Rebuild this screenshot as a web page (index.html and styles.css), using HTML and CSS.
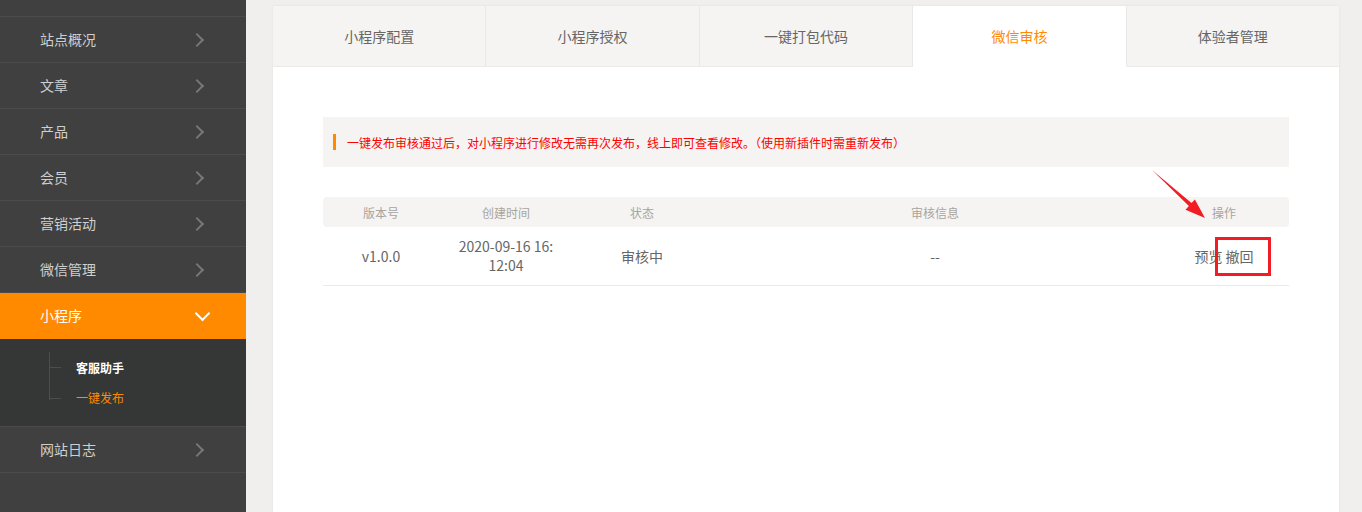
FILE: index.html
```html
<!DOCTYPE html>
<html lang="zh-CN">
<head>
    <meta charset="UTF-8">
    <title>一键发布</title>
    <link rel="stylesheet" href="styles.css">
</head>
<body>
<div class="layout">

    <!-- Sidebar -->
    <div class="sidebar">
        <div class="nav-item nav-cut"></div>
        <div class="nav-item"><span>站点概况</span><i class="chev"></i></div>
        <div class="nav-item"><span>文章</span><i class="chev"></i></div>
        <div class="nav-item"><span>产品</span><i class="chev"></i></div>
        <div class="nav-item"><span>会员</span><i class="chev"></i></div>
        <div class="nav-item"><span>营销活动</span><i class="chev"></i></div>
        <div class="nav-item"><span>微信管理</span><i class="chev"></i></div>
        <div class="nav-item active"><span>小程序</span><i class="chev down"></i></div>
        <div class="sub-menu">
            <div class="sub-tree">
                <div class="sub-item">客服助手</div>
                <div class="sub-item current">一键发布</div>
            </div>
        </div>
        <div class="nav-item"><span>网站日志</span><i class="chev"></i></div>
    </div>

    <!-- Main -->
    <div class="main">
        <div class="card">
            <div class="tabs">
                <div class="tab">小程序配置</div>
                <div class="tab">小程序授权</div>
                <div class="tab">一键打包代码</div>
                <div class="tab active">微信审核</div>
                <div class="tab">体验者管理</div>
            </div>

            <div class="card-body">
                <div class="notice">
                    <span class="notice-bar"></span>
                    一键发布审核通过后，对小程序进行修改无需再次发布，线上即可查看修改。（使用新插件时需重新发布）
                </div>

                <div class="table">
                    <div class="tr th">
                        <div class="c1">版本号</div>
                        <div class="c2">创建时间</div>
                        <div class="c3">状态</div>
                        <div class="c4">审核信息</div>
                        <div class="c5">操作</div>
                    </div>
                    <div class="tr td">
                        <div class="c1">v1.0.0</div>
                        <div class="c2"><div class="date">2020-09-16 16:12:04</div></div>
                        <div class="c3">审核中</div>
                        <div class="c4">--</div>
                        <div class="c5"><a>预览</a> <a>撤回</a></div>
                    </div>
                </div>
            </div>

            <!-- annotation -->
            <svg class="mark-arrow" width="65" height="60" viewBox="0 0 65 60">
                <polygon points="4,4 43.5,37.1 46.9,33.4 57,52 37.5,43.8 40.9,40.1" fill="#f21c24"/>
            </svg>
            <div class="mark-box"></div>
        </div>
    </div>

</div>
</body>
</html>
```

FILE: styles.css
```css
body {
    margin: 0;
    font-family: "Noto Sans CJK SC", "Liberation Sans", sans-serif;
    background-color: #f0efee;
    overflow: hidden;
}

.layout {
    display: flex;
    height: 512px;
}

/* Sidebar */
.sidebar {
    width: 246px;
    flex-shrink: 0;
    background-color: #404040;
}

.nav-item {
    height: 45px;
    box-sizing: content-box;
    border-bottom: 1px solid #4b4b4b;
    display: flex;
    align-items: center;
    justify-content: space-between;
    padding: 0 44px 0 40px;
    color: #cfcfcf;
    font-size: 14px;
}

.nav-item span {
    margin-top: -2px;
}

.nav-cut {
    height: 16px;
}

.nav-item.active {
    background-color: #ff8a00;
    color: #fff;
    border-bottom: none;
    height: 46px;
}

.chev {
    width: 8px;
    height: 8px;
    border-top: 2px solid #777;
    border-right: 2px solid #777;
    transform: rotate(45deg);
}

.chev.down {
    width: 9px;
    height: 9px;
    border-color: #fff;
    transform: rotate(135deg);
    margin-top: -5px;
    margin-right: -6px;
}

.sub-menu {
    background-color: #353636;
    height: 88px;
    border-bottom: 1px solid #4b4b4b;
    padding: 13px 0 0 49px;
    box-sizing: border-box;
}

.sub-tree {
    border-left: 1px solid #4d4d4d;
    height: 48px;
    padding-top: 8px;
    box-sizing: border-box;
}

.sub-item {
    position: relative;
    font-size: 12px;
    font-weight: bold;
    color: #fff;
    padding-left: 26px;
    height: 16px;
    line-height: 16px;
    margin-bottom: 14px;
}

.sub-item::before {
    content: "";
    position: absolute;
    left: 0;
    top: 7px;
    width: 11px;
    border-top: 1px solid #4d4d4d;
}

.sub-item.current {
    color: #ff8a00;
    font-weight: normal;
}

.sub-item.current::before {
    top: 8px;
}

/* Main */
.main {
    flex: 1;
    padding: 6px 23px 0 27px;
}

.card {
    position: relative;
    background-color: #fff;
    height: 520px;
    box-shadow: 0 0 3px rgba(0, 0, 0, 0.06);
}

.tabs {
    display: flex;
    height: 61px;
}

.tab {
    flex: 1;
    background-color: #f5f4f2;
    border-right: 1px solid #e9e8e6;
    border-bottom: 1px solid #ebeae8;
    display: flex;
    align-items: center;
    justify-content: center;
    font-size: 14px;
    color: #666;
}

.tab:last-child {
    border-right: none;
}

.tab.active {
    background-color: #fff;
    color: #ff8a00;
    border-bottom-color: #fff;
}

.card-body {
    padding: 50px 50px 0 50px;
}

.notice {
    background-color: #f5f4f2;
    height: 50px;
    display: flex;
    align-items: center;
    padding-left: 10px;
    font-size: 12px;
    color: #ff0000;
}

.notice-bar {
    width: 3px;
    height: 16px;
    background-color: #ff8a00;
    margin-right: 11px;
}

/* Table */
.table {
    margin-top: 30px;
}

.tr {
    display: flex;
    text-align: center;
    align-items: center;
}

.th {
    height: 30px;
    background-color: #f5f4f2;
    border-radius: 4px;
    font-size: 12px;
    color: #a8a4a0;
}

.td {
    height: 58px;
    border-bottom: 1px solid #ebebeb;
    font-size: 14px;
    color: #666;
}

.c1 { width: 116px; }
.c2 { width: 134px; }
.c3 { width: 138px; }
.c4 { flex: 1; }
.c5 { width: 130px; }

.date {
    width: 102px;
    margin: 0 auto;
    word-break: break-all;
    line-height: 19px;
}

.c5 a {
    color: #666;
}

/* Annotation */
.mark-arrow {
    position: absolute;
    left: 875px;
    top: 160px;
}

.mark-box {
    position: absolute;
    left: 942px;
    top: 231px;
    width: 50px;
    height: 33px;
    border: 3px solid #f21c24;
}
```
